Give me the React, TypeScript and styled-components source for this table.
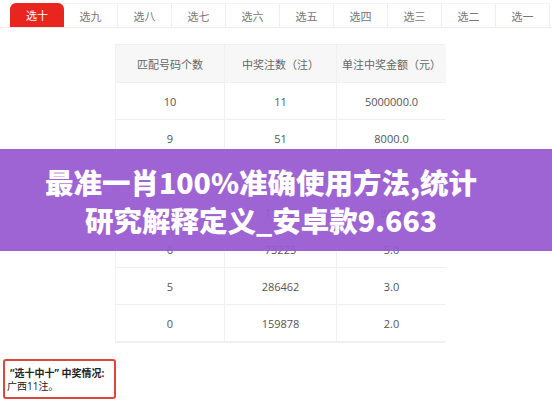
import React from "react";
import styled, { createGlobalStyle } from "styled-components";

const Global = createGlobalStyle`
  html, body { margin: 0; padding: 0; background: #fff; }
  body { font-family: "Open Sans", "Noto Sans CJK SC", sans-serif; }
`;

const Page = styled.div`
  position: relative;
  width: 552px;
  height: 400px;
  overflow: hidden;
  background: #fff;
`;

const TabBar = styled.div`
  display: flex;
  padding: 3px 0 0 10px;
  border-bottom: 1px solid #ececec;
  height: 24px;
`;

const Tab = styled.div<{ $active?: boolean }>`
  width: 54px;
  box-sizing: border-box;
  display: flex;
  align-items: center;
  justify-content: center;
  font-family: "Noto Sans CJK SC", sans-serif;
  font-size: 11px;
  color: ${(p) => (p.$active ? "#fff" : "#777")};
  background: ${(p) => (p.$active ? "#e8261f" : "#fff")};
  border-radius: ${(p) => (p.$active ? "6px 6px 0 0" : "0")};
  border-right: ${(p) => (p.$active ? "none" : "1px solid #efefef")};
  border-top: ${(p) => (p.$active ? "none" : "1px solid #f3f3f3")};
`;

const Table = styled.div`
  margin: 16px 0 0 115px;
  width: 330px;
  display: grid;
  grid-template-columns: 109px 112px 109px;
  border: 1px solid #f0f0f0;
  box-sizing: border-box;
`;

const Cell = styled.div<{ $head?: boolean }>`
  height: ${(p) => (p.$head ? "38px" : "37px")};
  display: flex;
  align-items: center;
  justify-content: center;
  font-family: ${(p) => (p.$head ? '"Noto Sans CJK SC", sans-serif' : '"Open Sans", "Noto Sans CJK SC", sans-serif')};
  font-size: 11px;
  color: ${(p) => (p.$head ? "#666" : "#555")};
  background: ${(p) => (p.$head ? "#f7f7f7" : "#fff")};
  border-bottom: 1px solid #f0f0f0;
  border-right: 1px solid #f0f0f0;
  box-sizing: border-box;
  &:nth-child(3n) { border-right: none; }
`;

const Banner = styled.div`
  position: absolute;
  left: 0;
  top: 149px;
  width: 552px;
  height: 102px;
  background: rgba(152, 88, 208, 0.93);
  display: flex;
  align-items: center;
  justify-content: center;
`;

const Title = styled.div`
  font-family: "Noto Sans CJK SC", sans-serif;
  font-weight: 800;
  font-size: 28.5px;
  line-height: 38px;
  color: #fff;
  text-align: center;
  white-space: nowrap;
  margin: 2px 30px 0 0;
`;

const Note = styled.div`
  margin: 16px 0 0 3px;
  width: 113px;
  height: 40px;
  box-sizing: border-box;
  border: 2px solid #d9473f;
  border-radius: 3px;
  padding: 6px 0 0 2px;
  font-family: "Open Sans", "Noto Sans CJK SC", sans-serif;
  font-size: 10px;
  line-height: 13px;
  color: #222;
  white-space: nowrap;
`;

const NoteHead = styled.div`
  font-weight: 700;
  padding-left: 3px;
`;

const tabs = ["选十", "选九", "选八", "选七", "选六", "选五", "选四", "选三", "选二", "选一"];
const rows = [
  ["10", "11", "5000000.0"],
  ["9", "51", "8000.0"],
  ["8", "1180", "800.0"],
  ["7", "11802", "80.0"],
  ["6", "73225", "5.0"],
  ["5", "286462", "3.0"],
  ["0", "159878", "2.0"],
];

export default function App() {
  return (
    <Page>
      <Global />
      <TabBar>
        {tabs.map((t, i) => (
          <Tab key={t} $active={i === 0}>{t}</Tab>
        ))}
      </TabBar>
      <Table>
        <Cell $head>匹配号码个数</Cell>
        <Cell $head>中奖注数（注）</Cell>
        <Cell $head>单注中奖金额（元）</Cell>
        {rows.map((r) => r.map((c, j) => <Cell key={r[0] + j}>{c}</Cell>))}
      </Table>
      <Note>
        <NoteHead>“选十中十” 中奖情况:</NoteHead>
        <div>广西11注。</div>
      </Note>
      <Banner>
        <Title>
          最准一肖100%准确使用方法,统计
          <br />
          研究解释定义_安卓款9.663
        </Title>
      </Banner>
    </Page>
  );
}
